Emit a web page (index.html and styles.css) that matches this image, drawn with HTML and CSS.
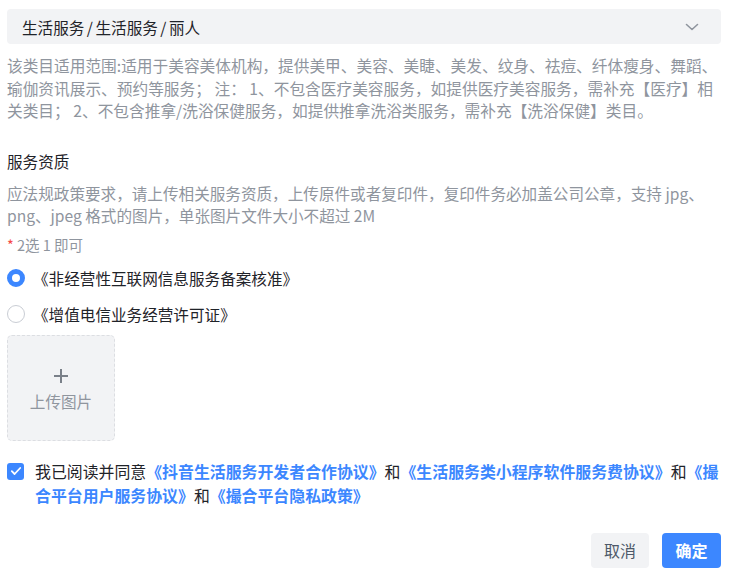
FILE: index.html
```html
<!DOCTYPE html>
<html lang="zh-CN">
<head>
<meta charset="utf-8">
<title>服务类目</title>
<link rel="stylesheet" href="styles.css">
</head>
<body>
<div class="page">
  <div class="select">
    <span class="select-value">生活服务 / 生活服务 / 丽人</span>
    <svg class="chevron" width="14" height="8" viewBox="0 0 14 8"><path d="M1.5 1.5 L7 6.5 L12.5 1.5" fill="none" stroke="#8f959e" stroke-width="1.6" stroke-linecap="round" stroke-linejoin="round"/></svg>
  </div>
  <p class="desc">该类目适用范围:适用于美容美体机构，提供美甲、美容、美睫、美发、纹身、祛痘、纤体瘦身、舞蹈、瑜伽资讯展示、预约等服务； 注： 1、不包含医疗美容服务，如提供医疗美容服务，需补充【医疗】相关类目； 2、不包含推拿/洗浴保健服务，如提供推拿洗浴类服务，需补充【洗浴保健】类目。</p>

  <h3 class="section-title">服务资质</h3>
  <p class="hint">应法规政策要求，请上传相关服务资质，上传原件或者复印件，复印件务必加盖公司公章，支持 jpg、png、jpeg 格式的图片，单张图片文件大小不超过 2M</p>
  <p class="required"><span class="star">*</span> 2选 1 即可</p>

  <div class="radios">
    <label class="radio-row"><span class="radio checked"></span><span class="radio-label">《非经营性互联网信息服务备案核准》</span></label>
    <label class="radio-row"><span class="radio"></span><span class="radio-label">《增值电信业务经营许可证》</span></label>
  </div>

  <div class="upload">
    <svg class="upload-plus" width="16" height="16" viewBox="0 0 16 16"><path d="M8 1 V15 M1 8 H15" fill="none" stroke="#7a8089" stroke-width="2"/></svg>
    <span class="upload-text">上传图片</span>
  </div>

  <div class="agree">
    <span class="checkbox"><svg width="12" height="10" viewBox="0 0 12 10"><path d="M1.8 5.2 L4.6 8 L10.2 2" fill="none" stroke="#fff" stroke-width="1.8" stroke-linecap="round" stroke-linejoin="round"/></svg></span>
    <p class="agree-text">我已阅读并同意<a class="link">《抖音生活服务开发者合作协议》</a>和<a class="link">《生活服务类小程序软件服务费协议》</a>和<a class="link">《撮合平台用户服务协议》</a>和<a class="link">《撮合平台隐私政策》</a></p>
  </div>

  <div class="actions">
    <button class="btn btn-cancel">取消</button>
    <button class="btn btn-ok">确定</button>
  </div>
</div>
</body>
</html>
```
FILE: styles.css
```css
* { box-sizing: border-box; }
html, body { margin: 0; padding: 0; background: #fff; }
body {
  font-family: "Noto Sans CJK SC", "Noto Sans", sans-serif;
  font-size: 15.6px;
  color: #1f2329;
}
.page {
  width: 746px;
  padding: 9px 25px 0 7px;
}
.select {
  height: 35px;
  background: #f2f3f5;
  border-radius: 4px;
  display: flex;
  align-items: center;
  justify-content: space-between;
  padding: 0 22px 0 15px;
}
.select-value { font-size: 15.6px; color: #1f2329; line-height: 22px; word-spacing: -1px; }
.chevron { display: block; }
.desc {
  margin: 11px 0 0;
  color: #8f959e;
  line-height: 22.5px;
  font-size: 15.7px;
}
.section-title {
  margin: 27px 0 0;
  font-size: 15.6px;
  font-weight: 400;
  line-height: 22px;
  color: #1f2329;
}
.hint {
  margin: 10px 0 0;
  color: #8f959e;
  line-height: 22px;
}
.required {
  margin: 8px 0 0;
  color: #8f959e;
  line-height: 22px;
  font-size: 14.5px;
}
.star { color: #f54a45; }
.radios {
  margin-top: 11px;
  display: flex;
  flex-direction: column;
  gap: 14px;
}
.radio-row {
  display: flex;
  align-items: center;
  height: 22px;
  gap: 8px;
}
.radio {
  width: 18px;
  height: 18px;
  border-radius: 50%;
  border: 1px solid #c9cdd4;
  background: #fff;
  flex: none;
}
.radio.checked {
  border: 5px solid #3c87ff;
}
.radio-label { line-height: 22px; color: #1f2329; }
.upload {
  margin-top: 10px;
  width: 108px;
  height: 106px;
  background: #f2f3f5;
  border: 1.5px dashed #dcdee2;
  border-radius: 5px;
  display: flex;
  flex-direction: column;
  align-items: center;
  justify-content: flex-start;
  padding-top: 32px;
  color: #8f959e;
}
.upload-plus { display: block; }
.upload-text { font-size: 15.6px; line-height: 22px; margin-top: 6px; }
.agree {
  margin-top: 19px;
  display: flex;
  align-items: flex-start;
  gap: 11px;
  margin-right: -5px;
}
.checkbox {
  flex: none;
  width: 17px;
  height: 17px;
  margin-top: 3px;
  background: #3c87ff;
  border-radius: 3px;
  display: flex;
  align-items: center;
  justify-content: center;
}
.agree-text {
  margin: 0;
  line-height: 24px;
  font-size: 15.9px;
  color: #1f2329;
}
.link { color: #3c87ff; font-weight: 700; }
.actions {
  margin-top: 25px;
  display: flex;
  justify-content: flex-end;
  gap: 13px;
}
.btn {
  font-family: inherit;
  font-size: 16px;
  height: 35px;
  border: none;
  border-radius: 4px;
  line-height: 35px;
  cursor: pointer;
}
.btn-cancel { background: #f2f3f5; color: #4e5969; width: 58px; padding: 0; }
.btn-ok { background: #3c87ff; color: #fff; font-weight: 700; width: 59px; padding: 0; }
```
